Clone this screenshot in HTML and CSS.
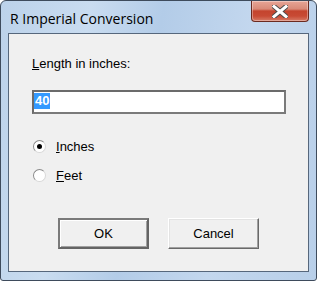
FILE: index.html
```html
<!DOCTYPE html>
<html lang="en">
<head>
    <meta charset="UTF-8">
    <title>R Imperial Conversion</title>
    <link rel="stylesheet" href="styles.css">
</head>
<body>
    <div class="window">
        <div class="titlebar">
            <span class="title">R Imperial Conversion</span>
            <div class="close-btn">
                <svg width="16" height="13" viewBox="0 0 16 13">
                    <path d="M2 1.5 L14 11.5 M14 1.5 L2 11.5" stroke="#4a4a4a" stroke-width="5" stroke-linecap="square"/>
                    <path d="M2 1.5 L14 11.5 M14 1.5 L2 11.5" stroke="#ffffff" stroke-width="3" stroke-linecap="square"/>
                </svg>
            </div>
        </div>
        <div class="client">
            <label class="field-label" for="length"><u>L</u>ength in inches:</label>
            <div class="textbox" id="length"><span class="selected">40</span></div>
            <div class="radios">
                <div class="radio-row">
                    <span class="radio checked"></span>
                    <span><u>I</u>nches</span>
                </div>
                <div class="radio-row">
                    <span class="radio"></span>
                    <span><u>F</u>eet</span>
                </div>
            </div>
            <div class="buttons">
                <button type="button" class="btn default">OK</button>
                <button type="button" class="btn">Cancel</button>
            </div>
        </div>
    </div>
</body>
</html>
```

FILE: styles.css
```css
body {
    margin: 0;
    width: 317px;
    height: 281px;
    overflow: hidden;
    font-family: "Liberation Sans", Arial, sans-serif;
    font-size: 13px;
    color: #000;
}

.window {
    box-sizing: border-box;
    width: 317px;
    height: 281px;
    border: 1px solid #3e4b5c;
    border-radius: 6px 6px 3px 3px;
    background: linear-gradient(100deg, #bcd2ea 0%, #c9dcf0 25%, #b3cce8 45%, #c3d7ee 70%, #b8cfe9 100%);
    padding: 0 7px 8px 7px;
    display: flex;
    flex-direction: column;
}

.titlebar {
    height: 32px;
    display: flex;
    align-items: flex-start;
    justify-content: space-between;
}

.title {
    font-family: "Open Sans", "Noto Sans", sans-serif;
    font-size: 14px;
    color: #000;
    margin: 8px 0 0 2px;
}

.close-btn {
    width: 56px;
    height: 20px;
    border: 1px solid #6b2a20;
    border-top: none;
    border-radius: 0 0 4px 4px;
    background: linear-gradient(#e7a596 0%, #d98a78 40%, #c4442e 50%, #c84a34 75%, #d67b66 100%);
    display: flex;
    align-items: center;
    justify-content: center;
    box-shadow: inset 0 0 0 1px rgba(255, 255, 255, 0.35);
}

.client {
    flex: 1;
    background: #f0f0f0;
    border: 1px solid #56677c;
    padding: 0 0 0 23px;
}

.field-label {
    display: block;
    margin-top: 22px;
    line-height: 15px;
}

.textbox {
    box-sizing: border-box;
    width: 254px;
    height: 24px;
    margin-top: 19px;
    background: #fff;
    border: 2px solid #6b6b6b;
    border-right-color: #7a7a7a;
    border-bottom-color: #7a7a7a;
}

.selected {
    display: inline-block;
    background: #3399ff;
    color: #fff;
    font-weight: bold;
    line-height: 16px;
    padding: 0 1px;
    margin-top: 1px;
}

.radios {
    margin-top: 24px;
}

.radio-row {
    display: flex;
    align-items: center;
    height: 16px;
    margin-bottom: 13px;
}

.radio {
    box-sizing: border-box;
    width: 13px;
    height: 13px;
    border-radius: 50%;
    border: 1px solid #8a8a8a;
    border-right-color: #d8d8d8;
    border-bottom-color: #d8d8d8;
    background: #fff;
    margin: 0 10px 0 1px;
    position: relative;
}

.radio.checked::after {
    content: "";
    position: absolute;
    left: 3px;
    top: 3px;
    width: 5px;
    height: 5px;
    border-radius: 50%;
    background: #000;
}

.buttons {
    display: flex;
    gap: 19px;
    margin: 35px 0 0 26px;
}

.btn {
    box-sizing: border-box;
    width: 91px;
    height: 31px;
    font-family: "Liberation Sans", Arial, sans-serif;
    font-size: 13px;
    background: #f0f0f0;
    border: 1px solid;
    border-color: #ffffff #696969 #696969 #ffffff;
    box-shadow: inset -1px -1px 0 #a0a0a0, inset 1px 1px 0 #e3e3e3;
    padding: 0;
    color: #000;
}

.btn.default {
    border: 2px solid #646464;
    border-top-color: #7a7a7a;
    border-left-color: #7a7a7a;
    box-shadow: inset 1px 1px 0 #ffffff, inset -1px -1px 0 #a0a0a0;
}
```
